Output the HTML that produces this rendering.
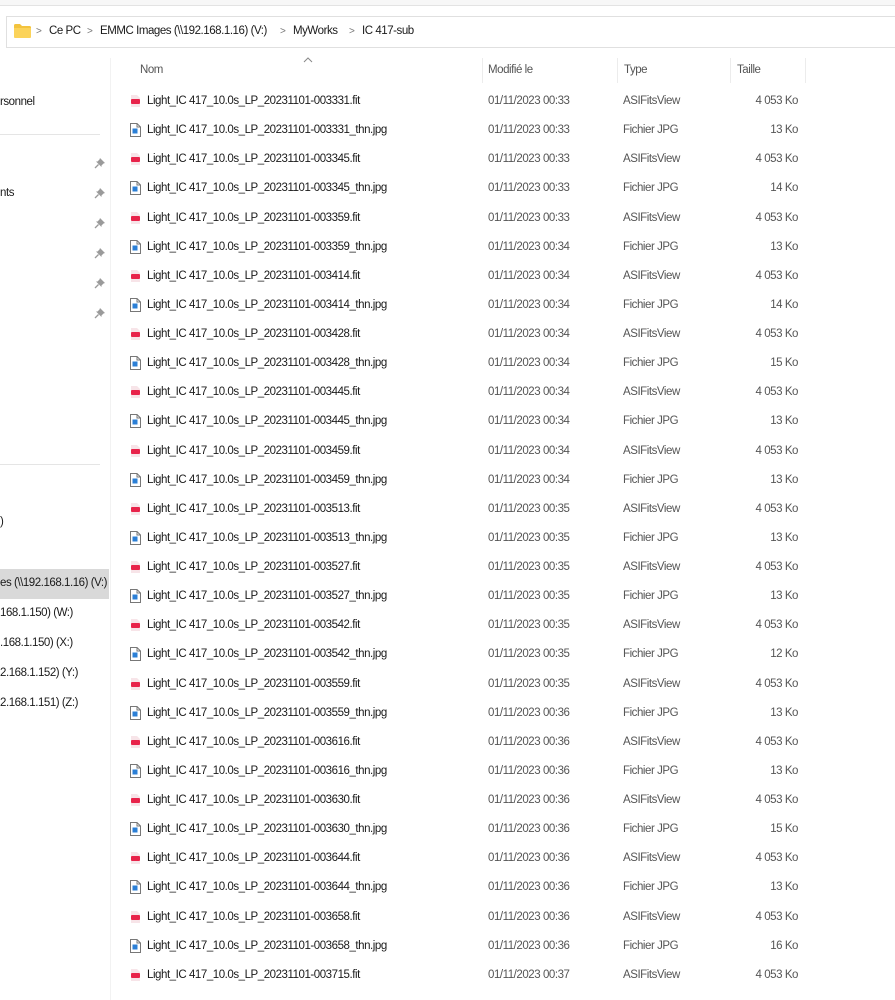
<!DOCTYPE html>
<html><head><meta charset="utf-8"><style>
*{margin:0;padding:0;box-sizing:border-box}
body{width:895px;height:1000px;overflow:hidden;background:#fff;font-family:"Liberation Sans",sans-serif;font-size:11.5px;color:#1a1a1a;position:relative;letter-spacing:-0.45px}
.a{position:absolute;white-space:nowrap}
.top{left:0;top:0;width:895px;height:6px;background:#f7f7f7;border-bottom:1px solid #e3e3e3}
.addr{left:6px;top:16px;width:900px;height:32px;border:1px solid #e0e0e0;border-right:none}
.bc{top:25px;font-size:11.5px;color:#1a1a1a}
.sep{color:#777;font-size:10px}
.hdr{top:64px;color:#555;font-size:11.5px}
.cs{top:58px;width:1px;height:25px;background:#ececec}
.rows{left:0;top:87px;width:895px}
.r{height:29.13px;position:relative;line-height:29px}
.r span{position:absolute;white-space:nowrap}
.n{left:147px;color:#1a1a1a}
.d{left:488px;color:#555}
.t{left:623px;color:#555}
.s{right:97px;color:#555}
.ic{position:absolute;left:130px;top:7px;width:11px;height:14px}
.nav{font-size:11.5px;color:#1a1a1a}
.pin{position:absolute;left:94px;width:12px;height:12px}
</style></head><body>
<div class="a top"></div>
<div class="a addr"></div>
<svg class="a" style="left:14px;top:24px" width="17" height="14" viewBox="0 0 17 14"><path d="M0 1.5Q0 0 1.5 0H6l2 2h7.5Q17 2 17 3.5V12.5Q17 14 15.5 14H1.5Q0 14 0 12.5Z" fill="#f3c33d"/><path d="M0 4H17V12.5Q17 14 15.5 14H1.5Q0 14 0 12.5Z" fill="#fbd35a"/></svg>
<div class="a bc" style="left:36px"><span class="sep">&gt;</span></div>
<div class="a bc" style="left:49px">Ce PC</div>
<div class="a bc" style="left:87px"><span class="sep">&gt;</span></div>
<div class="a bc" style="left:100px">EMMC Images (\\192.168.1.16) (V:)</div>
<div class="a bc" style="left:280px"><span class="sep">&gt;</span></div>
<div class="a bc" style="left:293px">MyWorks</div>
<div class="a bc" style="left:349px"><span class="sep">&gt;</span></div>
<div class="a bc" style="left:362px">IC 417-sub</div>

<div class="a" style="left:110px;top:58px;width:1px;height:942px;background:#f2f2f2"></div>
<div class="a nav" style="left:0;top:96px">rsonnel</div>
<div class="a" style="left:0;top:134px;width:100px;height:1px;background:#e5e5e5"></div>
<div class="a nav" style="left:0;top:187px">nts</div>
<svg width="0" height="0" style="position:absolute">
<defs>
<symbol id="pin" viewBox="0 0 12 12"><path d="M6 1L11 6L9.5 6.5L7.5 8.5L7.5 10L2 4.5L3.5 4.5L5.5 2.5Z" fill="#9a9a9a"/><path d="M4.5 7.5L1 11" stroke="#9a9a9a" stroke-width="1.3"/></symbol>
<symbol id="fit" viewBox="0 0 11 14"><path d="M1 1H7L10 4V13H1Z" fill="#f7e4e8"/><rect x="1" y="5" width="9" height="5" rx="1" fill="#e8234a"/></symbol>
<symbol id="jpg" viewBox="0 0 11 14"><path d="M0.5 0.5H7L10.5 4V13.5H0.5Z" fill="#fff" stroke="#777"/><path d="M7 0.5V4H10.5" fill="none" stroke="#777"/><rect x="2.5" y="5.5" width="5" height="5" fill="#2b7fd6"/></symbol>
</defs></svg>
<svg class="pin" style="top:157px"><use href="#pin"/></svg>
<svg class="pin" style="top:187px"><use href="#pin"/></svg>
<svg class="pin" style="top:217px"><use href="#pin"/></svg>
<svg class="pin" style="top:247px"><use href="#pin"/></svg>
<svg class="pin" style="top:277px"><use href="#pin"/></svg>
<svg class="pin" style="top:307px"><use href="#pin"/></svg>
<div class="a" style="left:0;top:464px;width:100px;height:1px;background:#e5e5e5"></div>
<div class="a nav" style="left:0;top:516px">)</div>
<div class="a" style="left:0;top:569px;width:109px;height:30px;background:#d9d9d9"></div>
<div class="a nav" style="left:0;top:577px">es (\\192.168.1.16) (V:)</div>
<div class="a nav" style="left:0;top:607px">168.1.150) (W:)</div>
<div class="a nav" style="left:0;top:637px">.168.1.150) (X:)</div>
<div class="a nav" style="left:0;top:667px">2.168.1.152) (Y:)</div>
<div class="a nav" style="left:0;top:697px">2.168.1.151) (Z:)</div>

<svg class="a" style="left:303px;top:57px" width="10" height="6"><path d="M1 5L5 1L9 5" fill="none" stroke="#888" stroke-width="1"/></svg>
<div class="a hdr" style="left:140px">Nom</div>
<div class="a cs" style="left:482px"></div>
<div class="a hdr" style="left:488px">Modifié le</div>
<div class="a cs" style="left:617px"></div>
<div class="a hdr" style="left:624px">Type</div>
<div class="a cs" style="left:730px"></div>
<div class="a hdr" style="left:737px">Taille</div>
<div class="a cs" style="left:805px"></div>

<div class="a rows">
<div class="r"><svg class="ic"><use href="#fit"/></svg><span class="n">Light_IC 417_10.0s_LP_20231101-003331.fit</span><span class="d">01/11/2023 00:33</span><span class="t">ASIFitsView</span><span class="s">4 053 Ko</span></div>
<div class="r"><svg class="ic"><use href="#jpg"/></svg><span class="n">Light_IC 417_10.0s_LP_20231101-003331_thn.jpg</span><span class="d">01/11/2023 00:33</span><span class="t">Fichier JPG</span><span class="s">13 Ko</span></div>
<div class="r"><svg class="ic"><use href="#fit"/></svg><span class="n">Light_IC 417_10.0s_LP_20231101-003345.fit</span><span class="d">01/11/2023 00:33</span><span class="t">ASIFitsView</span><span class="s">4 053 Ko</span></div>
<div class="r"><svg class="ic"><use href="#jpg"/></svg><span class="n">Light_IC 417_10.0s_LP_20231101-003345_thn.jpg</span><span class="d">01/11/2023 00:33</span><span class="t">Fichier JPG</span><span class="s">14 Ko</span></div>
<div class="r"><svg class="ic"><use href="#fit"/></svg><span class="n">Light_IC 417_10.0s_LP_20231101-003359.fit</span><span class="d">01/11/2023 00:33</span><span class="t">ASIFitsView</span><span class="s">4 053 Ko</span></div>
<div class="r"><svg class="ic"><use href="#jpg"/></svg><span class="n">Light_IC 417_10.0s_LP_20231101-003359_thn.jpg</span><span class="d">01/11/2023 00:34</span><span class="t">Fichier JPG</span><span class="s">13 Ko</span></div>
<div class="r"><svg class="ic"><use href="#fit"/></svg><span class="n">Light_IC 417_10.0s_LP_20231101-003414.fit</span><span class="d">01/11/2023 00:34</span><span class="t">ASIFitsView</span><span class="s">4 053 Ko</span></div>
<div class="r"><svg class="ic"><use href="#jpg"/></svg><span class="n">Light_IC 417_10.0s_LP_20231101-003414_thn.jpg</span><span class="d">01/11/2023 00:34</span><span class="t">Fichier JPG</span><span class="s">14 Ko</span></div>
<div class="r"><svg class="ic"><use href="#fit"/></svg><span class="n">Light_IC 417_10.0s_LP_20231101-003428.fit</span><span class="d">01/11/2023 00:34</span><span class="t">ASIFitsView</span><span class="s">4 053 Ko</span></div>
<div class="r"><svg class="ic"><use href="#jpg"/></svg><span class="n">Light_IC 417_10.0s_LP_20231101-003428_thn.jpg</span><span class="d">01/11/2023 00:34</span><span class="t">Fichier JPG</span><span class="s">15 Ko</span></div>
<div class="r"><svg class="ic"><use href="#fit"/></svg><span class="n">Light_IC 417_10.0s_LP_20231101-003445.fit</span><span class="d">01/11/2023 00:34</span><span class="t">ASIFitsView</span><span class="s">4 053 Ko</span></div>
<div class="r"><svg class="ic"><use href="#jpg"/></svg><span class="n">Light_IC 417_10.0s_LP_20231101-003445_thn.jpg</span><span class="d">01/11/2023 00:34</span><span class="t">Fichier JPG</span><span class="s">13 Ko</span></div>
<div class="r"><svg class="ic"><use href="#fit"/></svg><span class="n">Light_IC 417_10.0s_LP_20231101-003459.fit</span><span class="d">01/11/2023 00:34</span><span class="t">ASIFitsView</span><span class="s">4 053 Ko</span></div>
<div class="r"><svg class="ic"><use href="#jpg"/></svg><span class="n">Light_IC 417_10.0s_LP_20231101-003459_thn.jpg</span><span class="d">01/11/2023 00:34</span><span class="t">Fichier JPG</span><span class="s">13 Ko</span></div>
<div class="r"><svg class="ic"><use href="#fit"/></svg><span class="n">Light_IC 417_10.0s_LP_20231101-003513.fit</span><span class="d">01/11/2023 00:35</span><span class="t">ASIFitsView</span><span class="s">4 053 Ko</span></div>
<div class="r"><svg class="ic"><use href="#jpg"/></svg><span class="n">Light_IC 417_10.0s_LP_20231101-003513_thn.jpg</span><span class="d">01/11/2023 00:35</span><span class="t">Fichier JPG</span><span class="s">13 Ko</span></div>
<div class="r"><svg class="ic"><use href="#fit"/></svg><span class="n">Light_IC 417_10.0s_LP_20231101-003527.fit</span><span class="d">01/11/2023 00:35</span><span class="t">ASIFitsView</span><span class="s">4 053 Ko</span></div>
<div class="r"><svg class="ic"><use href="#jpg"/></svg><span class="n">Light_IC 417_10.0s_LP_20231101-003527_thn.jpg</span><span class="d">01/11/2023 00:35</span><span class="t">Fichier JPG</span><span class="s">13 Ko</span></div>
<div class="r"><svg class="ic"><use href="#fit"/></svg><span class="n">Light_IC 417_10.0s_LP_20231101-003542.fit</span><span class="d">01/11/2023 00:35</span><span class="t">ASIFitsView</span><span class="s">4 053 Ko</span></div>
<div class="r"><svg class="ic"><use href="#jpg"/></svg><span class="n">Light_IC 417_10.0s_LP_20231101-003542_thn.jpg</span><span class="d">01/11/2023 00:35</span><span class="t">Fichier JPG</span><span class="s">12 Ko</span></div>
<div class="r"><svg class="ic"><use href="#fit"/></svg><span class="n">Light_IC 417_10.0s_LP_20231101-003559.fit</span><span class="d">01/11/2023 00:35</span><span class="t">ASIFitsView</span><span class="s">4 053 Ko</span></div>
<div class="r"><svg class="ic"><use href="#jpg"/></svg><span class="n">Light_IC 417_10.0s_LP_20231101-003559_thn.jpg</span><span class="d">01/11/2023 00:36</span><span class="t">Fichier JPG</span><span class="s">13 Ko</span></div>
<div class="r"><svg class="ic"><use href="#fit"/></svg><span class="n">Light_IC 417_10.0s_LP_20231101-003616.fit</span><span class="d">01/11/2023 00:36</span><span class="t">ASIFitsView</span><span class="s">4 053 Ko</span></div>
<div class="r"><svg class="ic"><use href="#jpg"/></svg><span class="n">Light_IC 417_10.0s_LP_20231101-003616_thn.jpg</span><span class="d">01/11/2023 00:36</span><span class="t">Fichier JPG</span><span class="s">13 Ko</span></div>
<div class="r"><svg class="ic"><use href="#fit"/></svg><span class="n">Light_IC 417_10.0s_LP_20231101-003630.fit</span><span class="d">01/11/2023 00:36</span><span class="t">ASIFitsView</span><span class="s">4 053 Ko</span></div>
<div class="r"><svg class="ic"><use href="#jpg"/></svg><span class="n">Light_IC 417_10.0s_LP_20231101-003630_thn.jpg</span><span class="d">01/11/2023 00:36</span><span class="t">Fichier JPG</span><span class="s">15 Ko</span></div>
<div class="r"><svg class="ic"><use href="#fit"/></svg><span class="n">Light_IC 417_10.0s_LP_20231101-003644.fit</span><span class="d">01/11/2023 00:36</span><span class="t">ASIFitsView</span><span class="s">4 053 Ko</span></div>
<div class="r"><svg class="ic"><use href="#jpg"/></svg><span class="n">Light_IC 417_10.0s_LP_20231101-003644_thn.jpg</span><span class="d">01/11/2023 00:36</span><span class="t">Fichier JPG</span><span class="s">13 Ko</span></div>
<div class="r"><svg class="ic"><use href="#fit"/></svg><span class="n">Light_IC 417_10.0s_LP_20231101-003658.fit</span><span class="d">01/11/2023 00:36</span><span class="t">ASIFitsView</span><span class="s">4 053 Ko</span></div>
<div class="r"><svg class="ic"><use href="#jpg"/></svg><span class="n">Light_IC 417_10.0s_LP_20231101-003658_thn.jpg</span><span class="d">01/11/2023 00:36</span><span class="t">Fichier JPG</span><span class="s">16 Ko</span></div>
<div class="r"><svg class="ic"><use href="#fit"/></svg><span class="n">Light_IC 417_10.0s_LP_20231101-003715.fit</span><span class="d">01/11/2023 00:37</span><span class="t">ASIFitsView</span><span class="s">4 053 Ko</span></div>
</div>
</body></html>
